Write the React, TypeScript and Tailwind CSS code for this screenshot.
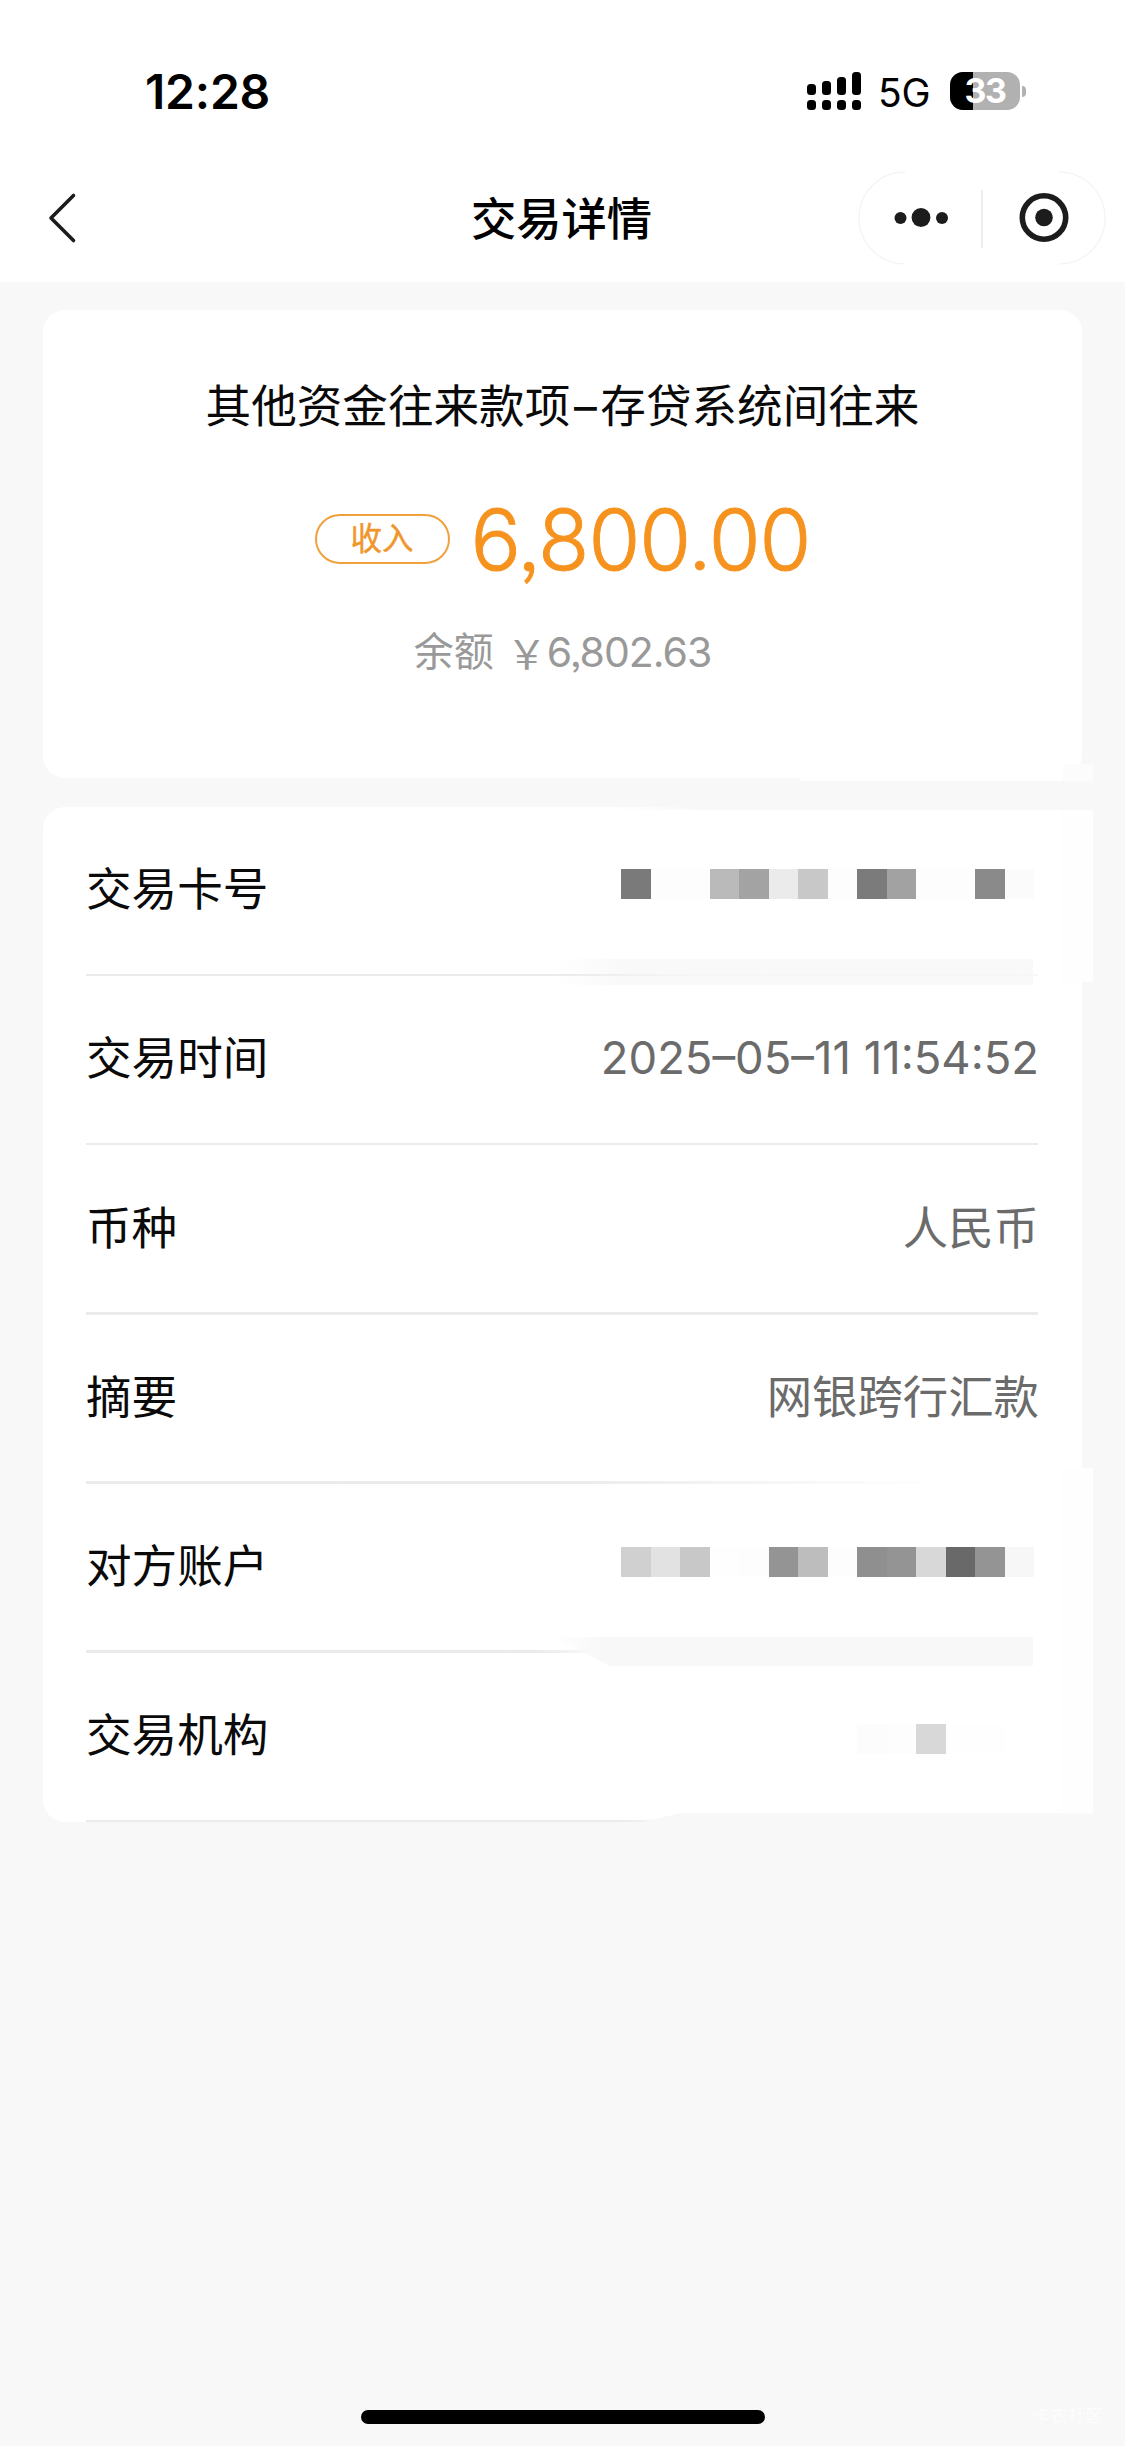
import type { ReactNode } from "react";
import clsx from "clsx";

const CARD_TILES = [
  "#7a7a7a", "#fdfdfd", "#fdfdfd", "#bababa", "#a3a3a3", "#ebebeb", "#c8c8c8",
  "#fdfdfd", "#7b7b7b", "#a2a2a2", "#fdfdfd", "#fdfdfd", "#8a8a8a", "#fbfbfb",
];

const ACCOUNT_TILES = [
  "#d0d0d0", "#e2e2e2", "#c8c8c8", "#fefefe", "#fdfdfd", "#949494", "#bdbdbd",
  "#fdfdfd", "#8f8f8f", "#949494", "#d8d8d8", "#696969", "#949494", "#f7f7f7",
];

const BRANCH_TILES = ["#fcfcfc", "#fdfdfd", "#d8d8d8", "#fefefe", "#fefefe", "#ffffff"];

function Mosaic({ tiles, className }: { tiles: string[]; className?: string }) {
  return (
    <div className={clsx("mr-[4px] flex h-[30px]", className)}>
      {tiles.map((color, i) => (
        <span key={i} className="h-full w-[29.5px]" style={{ backgroundColor: color }} />
      ))}
    </div>
  );
}

function Row({ label, children, line }: { label: string; children: ReactNode; line?: string }) {
  return (
    <div className="relative flex h-[169.2px] items-center justify-between pb-[3px]">
      <span className="text-[45.6px] leading-none text-[#0a0a0a]">{label}</span>
      {children}
      <span className={clsx("absolute bottom-0 left-0 h-[2.5px]", line ?? "w-full bg-[#ebebeb]")} />
    </div>
  );
}

function Value({ children, className }: { children: ReactNode; className?: string }) {
  return (
    <span className={clsx("text-[45.4px] leading-none text-[#6b6b6b] whitespace-nowrap", className)}>
      {children}
    </span>
  );
}

function StatusBar() {
  return (
    <div className="flex h-[172px] justify-between pl-[145px] pr-[99px] pt-[66px]">
      <span className="h-[50px] text-[48px] font-semibold leading-[51px] tracking-[-0.2px] text-black">12:28</span>
      <div className="flex h-[50px] items-center">
        <svg width="54" height="38" viewBox="0 0 54 38" className="mr-[17px] shrink-0">
          <rect x="0" y="12" width="9" height="11" rx="3.5" />
          <rect x="15" y="9" width="9" height="14" rx="3.5" />
          <rect x="30" y="5" width="9" height="18" rx="3.5" />
          <rect x="45" y="0" width="9" height="23" rx="3.5" />
          <rect x="0" y="28" width="9" height="10" rx="3.5" />
          <rect x="15" y="28" width="9" height="10" rx="3.5" />
          <rect x="30" y="28" width="9" height="10" rx="3.5" />
          <rect x="45" y="28" width="9" height="10" rx="3.5" />
        </svg>
        <span className="w-[72px] shrink-0 pt-[2px] text-[39px] leading-none tracking-[-0.2px] text-black">5G</span>
        <div className="relative flex h-[38px] w-[70px] shrink-0 items-center justify-center rounded-[13px] bg-[#b1b1b1]">
          <span className="absolute inset-y-0 left-0 w-[23px] rounded-l-[13px] bg-black" />
          <span className="relative text-[34px] font-bold leading-none tracking-[-1.5px] text-white">33</span>
        </div>
        <span className="ml-[2px] h-[11px] w-[4px] shrink-0 rounded-r-full bg-[#b1b1b1]" />
      </div>
    </div>
  );
}

function NavBar() {
  return (
    <div className="grid h-[110px] grid-cols-[1fr_auto_1fr] items-start">
      <svg width="32" height="54" viewBox="0 0 32 54" fill="none" className="ml-[46px] mt-[19px]">
        <path d="M27.5 4.5 5 27l22.5 22.5" stroke="#1c1c1c" strokeWidth="3.6" strokeLinecap="round" strokeLinejoin="round" />
      </svg>
      <h1 className="mr-[2px] mt-[25px] text-[45.3px] font-medium leading-[46px] text-black">交易详情</h1>
      <svg width="248" height="94" viewBox="0 0 248 94" fill="none" className="mr-[19px] -mt-px justify-self-end">
        <path d="M47 1a46 46 0 0 0 0 92M201 1a46 46 0 0 1 0 92" stroke="#f5f5f5" strokeWidth="1.5" />
        <path d="M124 19v58" stroke="#e8e8e8" strokeWidth="1.5" />
        <circle cx="42.5" cy="47" r="6" fill="#1c1c1c" />
        <circle cx="63" cy="46.5" r="9.4" fill="#1c1c1c" />
        <circle cx="84" cy="47" r="6" fill="#1c1c1c" />
        <circle cx="186" cy="46.5" r="21.7" stroke="#1c1c1c" strokeWidth="5.6" />
        <circle cx="186" cy="46.5" r="8.8" fill="#1c1c1c" />
      </svg>
    </div>
  );
}

export default function App() {
  return (
    <div className="flex h-[2446px] w-[1125px] flex-col overflow-hidden bg-[#f8f8f8] font-['Inter','Noto_Sans_CJK_SC',sans-serif]">
      <header className="bg-white">
        <StatusBar />
        <NavBar />
      </header>

      <main className="flex flex-1 flex-col gap-[29px] px-[43px] pt-[28px]">
        <section className="relative flex h-[468px] w-[1039px] flex-col items-center rounded-[22px] bg-white">
          <h2 className="mt-[72px] flex whitespace-nowrap text-[45.6px] leading-[50px] text-[#0a0a0a]">
            其他资金往来款项<span className="flex w-[30px] justify-center">–</span>存贷系统间往来
          </h2>
          <div className="mt-[67px] flex h-[80px] items-center gap-[21px]">
            <span className="flex h-[50px] w-[135px] items-center justify-center rounded-full border-[2.5px] border-[#f0a03c] text-[31.5px] leading-none text-[#f0962a] [-webkit-text-stroke:0.4px_#f0962a]">
              收入
            </span>
            <span className="pt-px text-[84px] font-light leading-none tracking-[-1px] text-[#f6921e] [-webkit-text-stroke:0.9px_#f6921e] [font-feature-settings:'ss03']">
              6,800.00
            </span>
          </div>
          <div className="mt-[48px] flex h-[50px] items-center text-[40px] leading-none text-[#999]">
            <span>余额</span>
            <span className="ml-[13px] w-[40px] text-center font-['Noto_Sans_CJK_SC']">{"\uffe5"}</span>
            <span className="text-[41px] tracking-[-1px] [font-feature-settings:'ss03']">6,802.63</span>
          </div>
          <span className="absolute -bottom-[3px] left-[757px] h-[3px] w-[282px] bg-white" />
          <span className="absolute -bottom-[3px] -right-[11px] h-[17px] w-[30px] bg-[#fcfcfc]" />
        </section>

        <section className="relative w-[1039px] rounded-[22px] bg-white pl-[43px] pr-[44px]">
          <span className="absolute -right-[11px] top-[3px] h-[172px] w-[33px] bg-[#fefefe]" />
          <span className="absolute -right-[11px] top-[661px] h-[346px] w-[33px] bg-[#fefefe]" />
          <span className="absolute right-0 top-0 h-[3px] w-[470px] bg-linear-to-r from-white to-[#f8f8f8] to-20%" />

          <Row label="交易卡号" line="w-full bg-linear-to-r from-[#ebebeb] from-50% to-[#f7f7f7] to-65%">
            <Mosaic tiles={CARD_TILES} className="-mt-[12px]" />
            <span className="absolute -bottom-[9px] right-[5px] h-[26px] w-[480px] bg-linear-to-r from-transparent to-[#f9f9f9] to-15%" />
          </Row>
          <Row label="交易时间">
            <Value className="-mr-px pb-[4px]">2025–05–11 11:54:52</Value>
          </Row>
          <Row label="币种">
            <Value className="-mr-px">人民币</Value>
          </Row>
          <Row label="摘要" line="w-full bg-linear-to-r from-[#ebebeb] from-50% to-white to-90%">
            <Value className="-mr-px">网银跨行汇款</Value>
          </Row>
          <Row label="对方账户" line="w-[500px] bg-linear-to-r from-[#ebebeb] from-90% to-[#f7f7f7]">
            <Mosaic tiles={ACCOUNT_TILES} className="-mt-[10px]" />
            <span className="absolute -bottom-[13px] right-[5px] h-[29px] w-[480px] bg-linear-to-r from-transparent to-[#f8f8f8] to-10% [clip-path:polygon(0_0,100%_0,100%_100%,12%_100%)]" />
          </Row>
          <Row label="交易机构" line="w-[590px] bg-linear-to-r from-[#ebebeb] from-90% to-[#f8f8f8]">
            <Mosaic tiles={BRANCH_TILES} className="mt-[6px]" />
          </Row>
          <span className="absolute -right-[11px] bottom-0 h-[9px] w-[450px] bg-[#f8f8f8] [clip-path:polygon(8%_0,100%_0,100%_100%,0_100%)]" />
        </section>
      </main>

      <footer className="relative flex h-[36px] justify-center">
        <span className="h-[14px] w-[404px] rounded-full bg-black" />
        <span className="absolute right-[22px] -top-[3px] text-[17.5px] leading-none text-[#fdfdfd]">卡农社区</span>
      </footer>
    </div>
  );
}
